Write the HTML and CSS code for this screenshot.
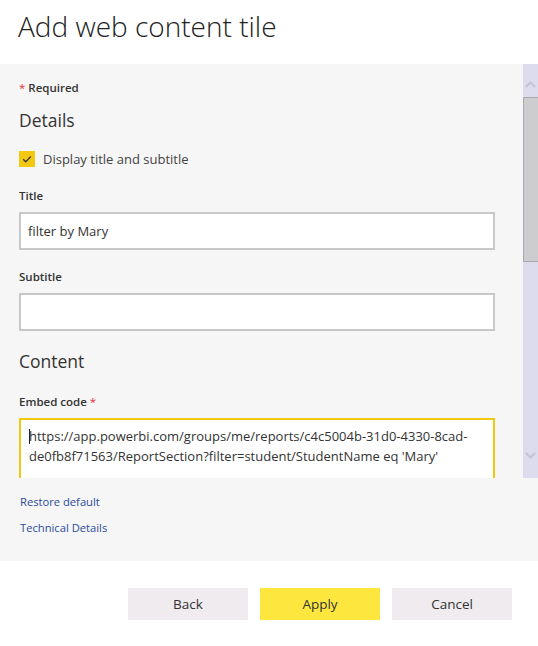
FILE: index.html
```html
<!DOCTYPE html>
<html lang="en">
<head>
<meta charset="utf-8">
<title>Add web content tile</title>
<link rel="stylesheet" href="styles.css">
</head>
<body>
<div class="dialog">
  <header class="dialog-header">
    <h1 class="dialog-title">Add web content tile</h1>
  </header>
  <div class="panel">
    <div class="scroll">
      <div class="scroll-content">
        <div class="required"><span class="star">*</span> Required</div>
        <h2 class="section-title first">Details</h2>
        <div class="check-row">
          <span class="checkbox">
            <svg width="16" height="16" viewBox="0 0 16 16"><path d="M4.2 8.2 L6.8 10.8 L11.8 5.6" fill="none" stroke="#3a3a3a" stroke-width="1.4"/></svg>
          </span>
          <span class="check-label">Display title and subtitle</span>
        </div>
        <div class="field-label label-title">Title</div>
        <div class="input">filter by Mary</div>
        <div class="field-label label-subtitle">Subtitle</div>
        <div class="input"></div>
        <h2 class="section-title content-title">Content</h2>
        <div class="field-label label-embed">Embed code <span class="star">*</span></div>
        <div class="textarea"><span class="caret"></span>https://app.powerbi.com/groups/me/reports/c4c5004b-31d0-4330-8cad-<br>de0fb8f71563/ReportSection?filter=student/StudentName eq 'Mary'</div>
      </div>
      <div class="scrollbar">
        <svg class="arrow arrow-up" width="15" height="10" viewBox="0 0 15 10"><path d="M3 7 L7.5 2.5 L12 7" fill="none" stroke="#c4c3d2" stroke-width="2"/></svg>
        <div class="thumb"></div>
        <div class="track-spacer"></div>
        <svg class="arrow arrow-down" width="15" height="10" viewBox="0 0 15 10"><path d="M3 3 L7.5 7.5 L12 3" fill="none" stroke="#c4c3d2" stroke-width="2"/></svg>
      </div>
    </div>
    <div class="links">
      <a class="link" href="#">Restore default</a>
      <a class="link" href="#">Technical Details</a>
    </div>
  </div>
  <footer class="footer">
    <button class="btn">Back</button>
    <button class="btn btn-primary">Apply</button>
    <button class="btn">Cancel</button>
  </footer>
</div>
</body>
</html>
```

FILE: styles.css
```css
* { box-sizing: border-box; }

html, body {
  margin: 0;
  padding: 0;
  background: #ffffff;
}

body {
  font-family: "Open Sans", "Noto Sans", "Liberation Sans", sans-serif;
  color: #333333;
  width: 538px;
  height: 646px;
  overflow: hidden;
}

.dialog-header {
  height: 64px;
  padding: 10px 0 0 18px;
}

.dialog-title {
  margin: 0;
  font-size: 28px;
  line-height: 32px;
  font-weight: 300;
  color: #222222;
}

.panel {
  background: #f6f6f6;
  height: 497px;
  display: flex;
  flex-direction: column;
}

.scroll {
  height: 414px;
  display: flex;
}

.scroll-content {
  flex: 1;
  overflow: hidden;
  padding: 16px 28px 0 19px;
}

.required {
  font-size: 11.5px;
  font-weight: 600;
  line-height: 16px;
  color: #333333;
}

.star {
  color: #e0303a;
  font-weight: 400;
}

.section-title {
  margin: 0;
  font-size: 17.5px;
  font-weight: 400;
  line-height: 24px;
  color: #333333;
}

.section-title.first { margin-top: 12px; }
.section-title.content-title { margin-top: 18px; }

.check-row {
  display: flex;
  align-items: center;
  gap: 8px;
  margin-top: 19px;
  height: 16px;
}

.checkbox {
  width: 16px;
  height: 16px;
  background: #f2c811;
  display: block;
}

.checkbox svg { display: block; }

.check-label {
  font-size: 13px;
  line-height: 18px;
  color: #444444;
}

.field-label {
  font-size: 11.5px;
  font-weight: 600;
  line-height: 16px;
  margin-bottom: 8px;
  color: #333333;
}

.label-title { margin-top: 21px; }
.label-subtitle { margin-top: 19px; }
.label-embed { margin-top: 21px; }

.input {
  height: 38px;
  background: #ffffff;
  border: 2px solid #c8c8c8;
  padding: 0 7px;
  font-size: 13px;
  line-height: 34px;
  color: #333333;
}

.textarea {
  height: 90px;
  background: #ffffff;
  border: 2px solid #f2c811;
  padding: 6px 8px;
  font-size: 13px;
  line-height: 20px;
  color: #333333;
  white-space: nowrap;
  overflow: hidden;
}

.caret {
  display: inline-block;
  width: 0;
  height: 15px;
  border-left: 1px solid #222222;
  vertical-align: -3px;
  margin-right: -1px;
}

.scrollbar {
  width: 15px;
  background: #dddcee;
  display: flex;
  flex-direction: column;
  align-items: stretch;
}

.arrow {
  display: block;
  flex: none;
}

.arrow-up { margin-top: 16px; }

.thumb {
  margin-top: 7px;
  height: 165px;
  background: #cdcccf;
  border: 1px solid #a9a8ae;
  border-right: none;
}

.track-spacer { flex: 1; }

.arrow-down { margin-bottom: 18px; }

.links {
  display: flex;
  flex-direction: column;
  align-items: flex-start;
  gap: 10px;
  padding: 16px 0 0 20px;
}

.link {
  font-size: 11.2px;
  line-height: 16px;
  color: #2a4b9b;
  text-decoration: none;
}

.footer {
  display: flex;
  justify-content: flex-end;
  gap: 12px;
  padding: 27px 26px 0 0;
}

.btn {
  width: 120px;
  height: 32px;
  border: none;
  background: #efebef;
  font-family: "Open Sans", "Noto Sans", "Liberation Sans", sans-serif;
  font-size: 13.5px;
  line-height: 32px;
  color: #333333;
  padding: 0;
}

.btn-primary {
  background: #fde73f;
}
```
